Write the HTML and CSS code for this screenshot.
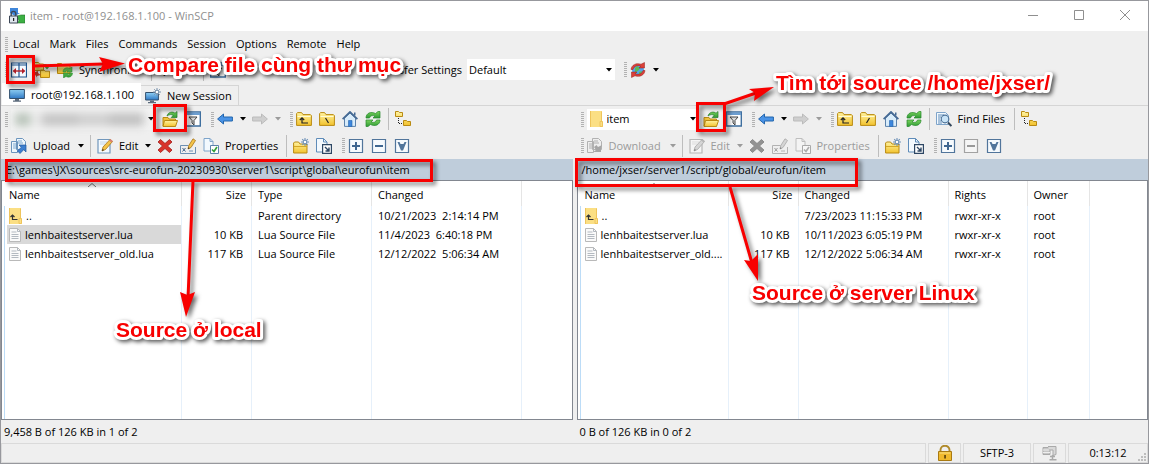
FILE: index.html
```html
<!DOCTYPE html>
<html lang="en">
<head>
<meta charset="utf-8">
<title>item - root@192.168.1.100 - WinSCP</title>
<link rel="stylesheet" href="styles.css">
</head>
<body>
<svg class="sprite" aria-hidden="true">
  <defs>
    <linearGradient id="gold" x1="0" y1="0" x2="0" y2="1"><stop offset="0" stop-color="#fff3a0"/><stop offset="1" stop-color="#f2c22e"/></linearGradient>
    <linearGradient id="blue" x1="0" y1="0" x2="0" y2="1"><stop offset="0" stop-color="#8fd0f5"/><stop offset="1" stop-color="#2f78c4"/></linearGradient>
    <linearGradient id="green" x1="0" y1="0" x2="0" y2="1"><stop offset="0" stop-color="#7bd35c"/><stop offset="1" stop-color="#2e9a35"/></linearGradient>
  </defs>
  <symbol id="i-caret" viewBox="0 0 6 4"><path d="M0 0h6L3 3.6z" fill="currentColor"/></symbol>
  <symbol id="i-app" viewBox="0 0 16 16"><path d="M1 0h8v5h2L6 8 1 5z" fill="#3f86da"/><path d="M8 8l4-1 4 0v8h-8l2-2z" fill="#3cb043" stroke="#24702a" stroke-width=".6"/><path d="M2.2 8V6a2.3 2.6 0 0 1 4.6 0v2" fill="none" stroke="#3d4757" stroke-width="1.4"/><path d="M.5 8h8v7h-8z" fill="#dfe6ee" stroke="#3d4757"/><path d="M4 10h1.2v3H4z" fill="#222"/></symbol>
  <symbol id="i-folder" viewBox="0 0 16 16"><path d="M.6 14.4V2.5L1.6 1.6h4l1.4 2h7.4l1 1v9.8z" fill="url(#gold)" stroke="#b98a12"/><path d="M1.5 5.5h13" stroke="#fffbd5"/></symbol>
  <symbol id="i-up" viewBox="0 0 16 16"><use href="#i-folder"/><path d="M6 7v5h6M3.800 9L6 6.800 8.200 9" fill="none" stroke="#222" stroke-width="1.200"/></symbol>
  <symbol id="i-root" viewBox="0 0 16 16"><use href="#i-folder"/><path d="M6.500 7l3 5" fill="none" stroke="#222" stroke-width="1.200"/></symbol>
  <symbol id="i-rroot" viewBox="0 0 16 16"><use href="#i-folder"/><path d="M9.500 7l-3 5" fill="none" stroke="#222" stroke-width="1.200"/></symbol>
  <symbol id="i-open" viewBox="0 0 16 16"><path d="M1 15V6.500h5l1 1.500h6.500v7z" fill="#efc23c" stroke="#b98a12"/><path d="M2.500 9.500h13L13.500 15.500H1z" fill="url(#gold)" stroke="#b98a12"/><path d="M5 5C6 .8 11 .2 13 2.200L15 .5v6H9.200l2-2C9.500 3 7 3.500 5 5z" fill="url(#green)" stroke="#237a2a" stroke-width=".7"/></symbol>
  <symbol id="i-filter" viewBox="0 0 16 16"><path d="M.7 1h14.600v14H.7z" fill="#fff" stroke="#3f6f9f" stroke-width="1.400"/><path d="M1 1.500h14v2.500H1z" fill="#6d9ed0"/><path d="M4 6h8L9 9.500V14L7 12V9.500z" fill="#ddd" stroke="#444"/></symbol>
  <symbol id="i-back" viewBox="0 0 16 16"><path d="M.6 8L6.500 3v3H15.400v4H6.500v3z" fill="#4a93e6" stroke="#2366ad"/></symbol>
  <symbol id="i-fwd" viewBox="0 0 16 16"><path d="M15.400 8L9.500 3v3H.6v4h8.900v3z" fill="#bbb" stroke="#999"/></symbol>
  <symbol id="i-home" viewBox="0 0 16 16"><path d="M2.500 7v8.400h11V7L8 2z" fill="#d9ecfa" stroke="#5c82ab"/><path d="M.6 8.200L8 1l7.400 7.200" fill="none" stroke="#466a94" stroke-width="1.800"/><path d="M6.500 9.500h3.500v6H6.500z" fill="#3d86dc" stroke="#2765ab" stroke-width=".6"/><path d="M12 1.500h1.500v3H12z" fill="#466a94"/></symbol>
  <symbol id="i-refresh" viewBox="0 0 16 16"><path d="M1 7C1 2 6 .2 10.500 2.500L13 .5h2v6.500H8l2-2C7 4 5 5 4.500 7z" fill="url(#green)" stroke="#26882d" stroke-width=".7"/><path d="M15 9c0 5-5 6.800-9.500 4.500L3 15.500H1V9h7l-2 2c3 1 5 0 5.500-2z" fill="url(#green)" stroke="#26882d" stroke-width=".7"/></symbol>
  <symbol id="i-tree" viewBox="0 0 16 16"><path d="M3.500 7v5.500H8" fill="none" stroke="#222" stroke-dasharray="1 1"/><path d="M.5 5.500v-5h3l1 1h3v4zM8.500 14.500v-5h3l1 1h3v4z" fill="url(#gold)" stroke="#b98a12"/></symbol>
  <symbol id="i-upload" viewBox="0 0 16 16"><path d="M.5 3.500h6v11h-6zM5.500.5h6l3 3v8h-9z" fill="#eef6fc" stroke="#6c95bd"/><path d="M2 6h3M2 8h3M2 10h3M7 3h4M7 5h5" stroke="#7fa9cf"/><path d="M8 7h7v7l-2.300-2.300L9 15.500 6.500 13l3.800-3.700z" fill="#3d7fd0" stroke="#1f579c" stroke-width=".7"/></symbol>
  <symbol id="i-download" viewBox="0 0 16 16"><path d="M.5 3.500h6v11h-6zM5.500.5h6l3 3v8h-9z" fill="#eee" stroke="#888"/><path d="M2 6h3M2 8h3M2 10h3M7 3h4M7 5h5" stroke="#888"/><path d="M15 7L11 9 9.500 7 7 9l2 3-3 2h8V9z" fill="#777"/></symbol>
  <symbol id="i-edit" viewBox="0 0 16 16"><path d="M1 1.500h12v13.500H1z" fill="#f4faff" stroke="#7197bc" stroke-width="1.200"/><path d="M3 4h7M3 6h5" stroke="#c2d5e8"/><path d="M5 13l1-4L13 1.500l2.500 2L8.500 11.500z" fill="#f4c44a" stroke="#a77316" stroke-width=".8"/><path d="M12 2.500l1.500-1.500 2.300 2L14.500 4.500z" fill="#d98070"/><path d="M5 13l.7-2 1.300 1z" fill="#222"/></symbol>
  <symbol id="i-del" viewBox="0 0 16 16"><path d="M3.500 1.500L8 5.500l4.500-4L15 4l-4.500 4 4.500 4-2.500 2.500L8 10.500l-4.500 4L1 12l4.500-4L1 4z" fill="#d9332b" stroke="#9f1c18" stroke-width=".8"/></symbol>
  <symbol id="i-rename" viewBox="0 0 16 16"><path d="M.5 7.500h8M15.500 9v6.500H.5v-8M9 13h4" fill="none" stroke="#6c8fb3"/><path d="M2.500 10l3 3.500M5.500 10l-3 3.500" stroke="#41638a"/><path d="M8 11l.8-3.500L13 .8l2.500 1.700-4.500 7z" fill="#f4c44a" stroke="#a77316" stroke-width=".8"/><path d="M8 11l.4-1.700 1.300.9z" fill="#222"/></symbol>
  <symbol id="i-props" viewBox="0 0 16 16"><path d="M1 .5h6l3 3V13H1z" fill="#f3f9fe" stroke="#7ea4ca"/><path d="M7 .5v3h3" fill="none" stroke="#7ea4ca"/><path d="M7.500 7.500h8v8h-8z" fill="#fff" stroke="#5c82ab"/><path d="M9 11.500l2 2 3-4.500" fill="none" stroke="#33a03a" stroke-width="1.700"/></symbol>
  <symbol id="i-newdir" viewBox="0 0 16 16"><path d="M.6 15V5L1.600 4h4l1.400 2h6l1 1v8z" fill="url(#gold)" stroke="#b98a12"/><path d="M1 8.500h13" stroke="#d4a726"/><path d="M12 0v8M8 4h8M9.200 1.200l5.600 5.600M14.800 1.200L9.200 6.800" stroke="#6f92b8" stroke-width="1.100"/><circle cx="12" cy="4" r="1.800" fill="#fff" stroke="#6f92b8"/></symbol>
  <symbol id="i-newfile" viewBox="0 0 16 16"><path d="M.5.5h7l3.500 3.500v10H.5z" fill="#f3f9fe" stroke="#5f8cb9"/><path d="M7.500.5v3.500H11" fill="none" stroke="#5f8cb9"/><path d="M6.600 6.600h8.800v8.800H6.600z" fill="#fff" stroke="#2e4764" stroke-width="1.200"/><path d="M9 9l4 4M13 9.500V13H9.500" fill="none" stroke="#2e4764" stroke-width="1.400"/></symbol>
  <symbol id="i-plus" viewBox="0 0 16 16"><path d="M1.500 1.500h13v13h-13z" fill="#f6fafd" stroke="#51759b" stroke-width="1.200"/><path d="M8 4v8M4 8h8" stroke="#3f6690" stroke-width="2"/></symbol>
  <symbol id="i-minus" viewBox="0 0 16 16"><path d="M1.500 1.500h13v13h-13z" fill="#f6fafd" stroke="#51759b" stroke-width="1.200"/><path d="M4 8h8" stroke="#3f6690" stroke-width="2"/></symbol>
  <symbol id="i-inv" viewBox="0 0 16 16"><path d="M1.500 1.500h13v13h-13z" fill="#f6fafd" stroke="#51759b" stroke-width="1.200"/><path d="M3.500 4h2l1 2h3l1-2h2L9 12.500H7z" fill="#51759b"/></symbol>
  <symbol id="i-find" viewBox="0 0 16 16"><path d="M.5 1.500h9l3 3v9H.5z" fill="#f3f9fe" stroke="#7ea4ca"/><path d="M2 4h6M2 6h3M2 8h2M2 10h3M2 12h4" stroke="#5f8cb9"/><path d="M12 11.500l3.400 3.500" stroke="#34475c" stroke-width="2"/><circle cx="9" cy="8" r="3.800" fill="#c9e4f7" stroke="#4d7298" stroke-width="1.200"/></symbol>
  <symbol id="i-compare" viewBox="0 0 16 16"><path d="M.5 1h15v14H.5z" fill="#f5faff" stroke="#1f5590" stroke-width="1.200"/><path d="M8 1v14M1 3h14" stroke="#1f5590" stroke-width="1.200"/><path d="M2.500 9h11" stroke="#b3202a" stroke-width="1.400"/><path d="M1.800 9L5 6v6zM14.200 9L11 6v6z" fill="#b3202a"/></symbol>
  <symbol id="i-dirsync" viewBox="0 0 16 16"><path d="M.5 8.500v-8h4l1 1.500h4v6.500zM6.500 15.500V8h3.500l1 1.200h4.500v6.300z" fill="url(#gold)" stroke="#b98a12"/><path d="M9 2.500c3-1 4.500 0 5 2h1.500L13 7.500 10.500 4.500" fill="#3ca443"/><path d="M1 10l3-1v2l3 2-4 1v1.500L.5 12z" fill="#ce3b2d"/></symbol>
  <symbol id="i-sync" viewBox="0 0 16 16"><path d="M.5 11.500v-10h4l1.500 1.500h7v8.500z" fill="url(#gold)" stroke="#b98a12"/><path d="M6 10c0-4 4-5 6.500-3.500L15 5v5h-5l1-1.500c-1-.5-2 0-2.200 1.500zM15.500 11c0 4-4 5-6.500 3.500L6.500 16v-5h5l-1 1.500c1 .5 2 0 2.200-1.500z" fill="url(#green)" stroke="#26882d" stroke-width=".5"/></symbol>
  <symbol id="i-pc" viewBox="0 0 16 16"><path d="M.6 2.500h14.800v9H.6z" fill="url(#blue)" stroke="#33506e"/><path d="M6 12h4v1.500h2v1.200H4v-1.200h2z" fill="#5c6b7c"/></symbol>
  <symbol id="i-pcnew" viewBox="0 0 16 16"><path d="M.6 4.500h12.800v7.500H.6z" fill="url(#blue)" stroke="#33506e"/><path d="M5 12.500h4V14h2v1.200H3V14h2z" fill="#5c6b7c"/><path d="M12 0v8M8 4h8M9.200 1.200l5.600 5.600M14.800 1.200L9.200 6.800" stroke="#7b93ac"/><circle cx="12" cy="4" r="1.800" fill="#fff" stroke="#7b93ac"/></symbol>
  <symbol id="i-globe" viewBox="0 0 16 16"><circle cx="8" cy="8" r="6" fill="#57a4e8"/><path d="M5 6l2-2 3 2-2 3-3 1zM9 10l3-1-1 3H9z" fill="#5cbb55"/><path d="M1 7.500C1.500 3 6 .5 11 2.200L14.500.5v5.500H9L10.800 4.200C7 2.800 4 4.200 3 7.500zM15 8.500c-.5 4.500-5 7-10 5.300L1.500 15.500V10H7L5.200 11.800c3.800 1.400 6.800 0 7.800-3.300z" fill="#db4038" stroke="#951f1c" stroke-width=".5"/></symbol>
  <symbol id="i-yfolder" viewBox="0 0 13 16"><path d="M0 0h12v10.500h1V16H0z" fill="#fbdf84"/><path d="M11.500.5v10M.5 0v16M10 15.500v-5h2.500v5z" fill="none" stroke="#eec45c"/></symbol>
  <symbol id="i-parent" viewBox="0 0 13 16"><use href="#i-yfolder"/><path d="M3.500 7.500v4H8.500M1.500 9L3.500 7l2 2" fill="none" stroke="#333" stroke-width="1.200"/></symbol>
  <symbol id="i-file" viewBox="0 0 12 14"><path d="M.5.5h8l3 3v10H.5z" fill="#fafafa" stroke="#b9b9b9"/><path d="M8.500.5v3h3M2.500 4h5M2.500 6.500h7M2.500 8.500h7M2.500 10.500h7" fill="none" stroke="#b3b9c0"/></symbol>
  <symbol id="i-lock" viewBox="0 0 16 16"><path d="M3.500 7V5a4.500 4.300 0 0 1 9 0v2" fill="none" stroke="#b08a2a" stroke-width="1.900"/><path d="M1.500 6.500h13v9h-13z" fill="#f0b92d" stroke="#a97a12"/><path d="M2.500 8h11" stroke="#fbe083"/><path d="M7.300 10h1.500v3.500H7.300z" fill="#4c3608"/></symbol>
  <symbol id="i-zip" viewBox="0 0 16 16"><path d="M1 2.500h7l-1 2h1v5H1z" fill="#c6c6c6" stroke="#a9a9a9"/><path d="M1 5h7M1 7.500h7" stroke="#eee"/><path d="M6 1.500h8v8l-3 1V5H7" fill="#d8d8d8" stroke="#a9a9a9"/><path d="M8 11.500h5M10.500 10v4M7.500 14.800h7" stroke="#a9a9a9" stroke-width="1.500"/></symbol>
</svg>

<main class="window">
  <header class="titlebar">
    <svg class="ico"><use href="#i-app"/></svg>
    <h1>item - root@192.168.1.100 - WinSCP</h1>
    <div class="winbtns">
      <button aria-label="Minimize"><svg viewBox="0 0 10 10"><path d="M0 5.500h10"/></svg></button>
      <button aria-label="Maximize"><svg viewBox="0 0 10 10"><path d="M.5.5h9v9h-9z"/></svg></button>
      <button aria-label="Close"><svg viewBox="0 0 10 10"><path d="M0 0l10 10M10 0L0 10"/></svg></button>
    </div>
  </header>

  <nav class="menu">
    <i class="grip"></i>
    <button>Local</button><button>Mark</button><button>Files</button><button>Commands</button><button>Session</button><button>Options</button><button>Remote</button><button>Help</button>
  </nav>

  <div class="bar main-bar">
    <i class="grip"></i>
    <button class="btn" aria-label="Compare"><svg class="ico"><use href="#i-compare"/></svg></button>
    <button class="btn" aria-label="Synchronize folders"><svg class="ico"><use href="#i-dirsync"/></svg></button>
    <button class="btn wide-sync"><svg class="ico"><use href="#i-sync"/></svg>Synchronize</button>
    <i class="sep"></i>
    <button class="btn queue">Queue</button>
    <i class="sep"></i>
    <button class="btn" aria-label="Queue list"><svg class="ico"><use href="#i-filter"/></svg></button>
    <label class="preset" for="preset">Transfer Settings</label>
    <span class="combo preset-combo"><select id="preset"><option>Default</option></select><svg class="caret"><use href="#i-caret"/></svg></span>
    <i class="grip"></i>
    <button class="btn" aria-label="Keep remote directory up to date"><svg class="ico"><use href="#i-globe"/></svg></button>
    <button class="drop" aria-label="More"><svg class="caret"><use href="#i-caret"/></svg></button>
  </div>

  <div class="tabs">
    <button class="tab active"><svg class="ico"><use href="#i-pc"/></svg>root@192.168.1.100</button>
    <button class="tab"><svg class="ico"><use href="#i-pcnew"/></svg>New Session</button>
  </div>

  <div class="panels">
    <section class="panel">
      <div class="bar">
        <i class="grip"></i>
        <span class="combo drive"><select aria-label="Local drive"></select><span class="smudge"></span><svg class="caret"><use href="#i-caret"/></svg></span>
        <button class="btn" aria-label="Open directory"><svg class="ico"><use href="#i-open"/></svg></button>
        <button class="btn" aria-label="Filter"><svg class="ico"><use href="#i-filter"/></svg></button>
        <i class="grip"></i>
        <button class="btn" aria-label="Back"><svg class="ico"><use href="#i-back"/></svg></button>
        <button class="drop" aria-label="Back history"><svg class="caret"><use href="#i-caret"/></svg></button>
        <button class="btn" disabled aria-label="Forward"><svg class="ico"><use href="#i-fwd"/></svg></button>
        <button class="drop" disabled aria-label="Forward history"><svg class="caret"><use href="#i-caret"/></svg></button>
        <i class="grip"></i>
        <button class="btn" aria-label="Parent directory"><svg class="ico"><use href="#i-up"/></svg></button>
        <button class="btn" aria-label="Root directory"><svg class="ico"><use href="#i-root"/></svg></button>
        <button class="btn" aria-label="Home"><svg class="ico"><use href="#i-home"/></svg></button>
        <button class="btn" aria-label="Refresh"><svg class="ico"><use href="#i-refresh"/></svg></button>
        <i class="sep"></i>
        <button class="btn" aria-label="Tree"><svg class="ico"><use href="#i-tree"/></svg></button>
      </div>
      <div class="bar">
        <i class="grip"></i>
        <button class="btn w-upload"><svg class="ico"><use href="#i-upload"/></svg>Upload</button>
        <button class="drop" aria-label="Upload options"><svg class="caret"><use href="#i-caret"/></svg></button>
        <i class="sep"></i>
        <button class="btn w-edit"><svg class="ico"><use href="#i-edit"/></svg>Edit</button>
        <button class="drop" aria-label="Edit options"><svg class="caret"><use href="#i-caret"/></svg></button>
        <button class="btn" aria-label="Delete"><svg class="ico"><use href="#i-del"/></svg></button>
        <button class="btn" aria-label="Rename"><svg class="ico"><use href="#i-rename"/></svg></button>
        <button class="btn w-props"><svg class="ico"><use href="#i-props"/></svg>Properties</button>
        <i class="sep"></i>
        <button class="btn" aria-label="New directory"><svg class="ico"><use href="#i-newdir"/></svg></button>
        <button class="btn" aria-label="New file"><svg class="ico"><use href="#i-newfile"/></svg></button>
        <i class="grip"></i>
        <button class="btn" aria-label="Select"><svg class="ico"><use href="#i-plus"/></svg></button>
        <button class="btn" aria-label="Unselect"><svg class="ico"><use href="#i-minus"/></svg></button>
        <button class="btn" aria-label="Invert selection"><svg class="ico"><use href="#i-inv"/></svg></button>
      </div>
      <div class="path">E:\games\JX\sources\src-eurofun-20230930\server1\script\global\eurofun\item</div>
      <div class="list">
        <table>
          <colgroup><col class="c-lname"><col class="c-size"><col class="c-type"><col class="c-date"><col></colgroup>
          <thead><tr><th>Name<svg class="sort" viewBox="0 0 8 4"><path d="M0 4l4-3.500L8 4"/></svg></th><th class="num">Size</th><th>Type</th><th>Changed</th><th></th></tr></thead>
          <tbody>
            <tr><td><span class="file"><svg class="f-dir"><use href="#i-parent"/></svg>..</span></td><td class="num"></td><td>Parent directory</td><td>10/21/2023  2:14:14 PM</td><td></td></tr>
            <tr><td><span class="file selected"><svg class="f-doc"><use href="#i-file"/></svg>lenhbaitestserver.lua</span></td><td class="num">10 KB</td><td>Lua Source File</td><td>11/4/2023  6:40:18 PM</td><td></td></tr>
            <tr><td><span class="file"><svg class="f-doc"><use href="#i-file"/></svg>lenhbaitestserver_old.lua</span></td><td class="num">117 KB</td><td>Lua Source File</td><td>12/12/2022  5:06:34 AM</td><td></td></tr>
            <tr class="fill"><td></td><td></td><td></td><td></td><td></td></tr>
          </tbody>
        </table>
      </div>
      <p class="summary">9,458 B of 126 KB in 1 of 2</p>
    </section>

    <section class="panel remote">
      <div class="bar">
        <i class="grip"></i>
        <span class="combo dir"><svg class="f-dir"><use href="#i-yfolder"/></svg><select aria-label="Remote directory"><option>item</option></select><svg class="caret"><use href="#i-caret"/></svg></span>
        <button class="btn" aria-label="Open directory"><svg class="ico"><use href="#i-open"/></svg></button>
        <button class="btn" aria-label="Filter"><svg class="ico"><use href="#i-filter"/></svg></button>
        <i class="grip"></i>
        <button class="btn" aria-label="Back"><svg class="ico"><use href="#i-back"/></svg></button>
        <button class="drop" aria-label="Back history"><svg class="caret"><use href="#i-caret"/></svg></button>
        <button class="btn" disabled aria-label="Forward"><svg class="ico"><use href="#i-fwd"/></svg></button>
        <button class="drop" disabled aria-label="Forward history"><svg class="caret"><use href="#i-caret"/></svg></button>
        <i class="grip"></i>
        <button class="btn" aria-label="Parent directory"><svg class="ico"><use href="#i-up"/></svg></button>
        <button class="btn" aria-label="Root directory"><svg class="ico"><use href="#i-rroot"/></svg></button>
        <button class="btn" aria-label="Home"><svg class="ico"><use href="#i-home"/></svg></button>
        <button class="btn" aria-label="Refresh"><svg class="ico"><use href="#i-refresh"/></svg></button>
        <i class="sep"></i>
        <button class="btn w-find"><svg class="ico"><use href="#i-find"/></svg>Find Files</button>
        <i class="sep"></i>
        <button class="btn" aria-label="Tree"><svg class="ico"><use href="#i-tree"/></svg></button>
      </div>
      <div class="bar">
        <i class="grip"></i>
        <button class="btn w-download" disabled><svg class="ico"><use href="#i-download"/></svg>Download</button>
        <button class="drop" disabled aria-label="Download options"><svg class="caret"><use href="#i-caret"/></svg></button>
        <i class="sep"></i>
        <button class="btn w-edit" disabled><svg class="ico"><use href="#i-edit"/></svg>Edit</button>
        <button class="drop" disabled aria-label="Edit options"><svg class="caret"><use href="#i-caret"/></svg></button>
        <button class="btn" disabled aria-label="Delete"><svg class="ico"><use href="#i-del"/></svg></button>
        <button class="btn" disabled aria-label="Rename"><svg class="ico"><use href="#i-rename"/></svg></button>
        <button class="btn w-props" disabled><svg class="ico"><use href="#i-props"/></svg>Properties</button>
        <i class="sep"></i>
        <button class="btn" aria-label="New directory"><svg class="ico"><use href="#i-newdir"/></svg></button>
        <button class="btn" aria-label="New file"><svg class="ico"><use href="#i-newfile"/></svg></button>
        <i class="grip"></i>
        <button class="btn" aria-label="Select"><svg class="ico"><use href="#i-plus"/></svg></button>
        <button class="btn" disabled aria-label="Unselect"><svg class="ico"><use href="#i-minus"/></svg></button>
        <button class="btn" aria-label="Invert selection"><svg class="ico"><use href="#i-inv"/></svg></button>
      </div>
      <div class="path">/home/jxser/server1/script/global/eurofun/item</div>
      <div class="list">
        <table>
          <colgroup><col class="c-rname"><col class="c-size"><col class="c-date"><col class="c-rights"><col class="c-owner"><col></colgroup>
          <thead><tr><th>Name<svg class="sort" viewBox="0 0 8 4"><path d="M0 4l4-3.500L8 4"/></svg></th><th class="num">Size</th><th>Changed</th><th>Rights</th><th>Owner</th><th></th></tr></thead>
          <tbody>
            <tr><td><span class="file"><svg class="f-dir"><use href="#i-parent"/></svg>..</span></td><td class="num"></td><td>7/23/2023 11:15:33 PM</td><td>rwxr-xr-x</td><td>root</td><td></td></tr>
            <tr><td><span class="file"><svg class="f-doc"><use href="#i-file"/></svg>lenhbaitestserver.lua</span></td><td class="num">10 KB</td><td>10/11/2023 6:05:19 PM</td><td>rwxr-xr-x</td><td>root</td><td></td></tr>
            <tr><td><span class="file"><svg class="f-doc"><use href="#i-file"/></svg>lenhbaitestserver_old....</span></td><td class="num">117 KB</td><td>12/12/2022 5:06:34 AM</td><td>rwxr-xr-x</td><td>root</td><td></td></tr>
            <tr class="fill"><td></td><td></td><td></td><td></td><td></td><td></td></tr>
          </tbody>
        </table>
      </div>
      <p class="summary">0 B of 126 KB in 0 of 2</p>
    </section>
  </div>

  <footer class="status">
    <span class="cell grow"></span>
    <span class="cell s-lock"><svg class="ico"><use href="#i-lock"/></svg></span>
    <span class="cell s-proto">SFTP-3</span>
    <span class="cell s-zip"><svg class="ico"><use href="#i-zip"/></svg></span>
    <span class="cell s-time">0:13:12<svg class="resize" viewBox="0 0 8 8"><path d="M6 0h2v2H6zM3 3h2v2H3zM6 3h2v2H6zM0 6h2v2H0zM3 6h2v2H3zM6 6h2v2H6z"/></svg></span>
  </footer>
</main>

<svg class="notes" width="1149" height="464" viewBox="0 0 1149 464">
  <g class="marks">
    <rect x="7.500" y="56.500" width="26" height="26"/>
    <rect x="154.500" y="105.500" width="31" height="25"/>
    <rect x="6.500" y="160.500" width="425" height="20"/>
    <rect x="697.500" y="103.500" width="27" height="27"/>
    <rect x="576.500" y="159.500" width="280" height="26"/>
    <path d="M34 66L104 64M193 181L188 298M730 187L752 263M724 104L756 93"/>
  </g>
  <g class="heads">
    <path d="M99 57L125 63.500 99 72l4-8z"/>
    <path d="M180 292l7.500 3 7.500-3-9 25z"/>
    <path d="M744 260l7 1 7-7 0 27z"/>
    <path d="M749 89l25-2-20 14 1-8z"/>
  </g>
  <g class="captions">
    <text x="128" y="72">Compare file cùng thư mục</text>
    <text x="776" y="90">Tìm tới source /home/jxser/</text>
    <text x="116" y="337">Source ở local</text>
    <text x="752" y="300">Source ở server Linux</text>
  </g>
</svg>
</body>
</html>
```

FILE: styles.css
```css
* { box-sizing: border-box; }

body {
  margin: 0;
  background: #a0a0a6;
  color: #000;
  font: 11px/16px "Open Sans", "Noto Sans", sans-serif;
}

button, select {
  margin: 0;
  padding: 0;
  border: 0;
  background: none;
  color: inherit;
  font: inherit;
}

.sprite { position: absolute; width: 0; height: 0; }

.window {
  display: flex;
  flex-direction: column;
  min-height: 100vh;
  border: 1px solid #97989d;
  background: #efefef;
}

.ico { flex: none; width: 16px; height: 16px; }
.caret { flex: none; width: 6px; height: 4px; }

.titlebar {
  display: flex;
  align-items: center;
  height: 30px;
  padding-left: 8px;
  gap: 5px;
  background: #fff;
  color: #8f8f8f;
}
.titlebar h1 { flex: 1; margin: 0; font-size: 11px; font-weight: 400; }
.winbtns { display: flex; }
.winbtns button { width: 46px; height: 28px; }
.winbtns svg { width: 10px; height: 10px; fill: none; stroke: #8f8f8f; }

.grip {
  flex: none;
  width: 3px;
  height: 15px;
  margin-left: 6px;
  background: repeating-linear-gradient(#b2b2b2 0 1px, #efefef 1px 2px);
}
.grip:first-child { margin-left: 4px; }

.menu { display: flex; align-items: center; height: 26px; gap: 10px; }
.menu .grip { margin-right: -5px; }

.bar { display: flex; align-items: center; height: 26px; }
.bar + .bar { height: 27px; }
.main-bar { height: 25px; }

.btn {
  display: flex;
  flex: none;
  align-items: center;
  width: 23px;
  height: 23px;
  padding-left: 3px;
  gap: 6px;
  white-space: nowrap;
}
.btn:disabled, .drop:disabled { color: #9b9b9b; }
.btn:disabled .ico { filter: grayscale(1); opacity: 0.6; }
.drop { display: flex; flex: none; align-items: center; justify-content: center; width: 12px; height: 23px; }
.sep { flex: none; width: 1px; height: 22px; margin: 0 3px; background: #bdbdbd; }

.w-upload { width: 67px; }
.w-download { width: 83px; }
.w-edit { width: 48px; }
.w-props { width: 83px; }
.w-find { width: 78px; }
.wide-sync { width: 94px; }
.queue { width: 45px; }

.combo { display: flex; flex: none; align-items: center; height: 21px; background: #fff; }
.combo select { flex: 1; min-width: 0; height: 21px; appearance: none; outline: 0; }
.combo .caret { margin: 0 3px; }
.drive { position: relative; width: 146px; margin: 0 2px 0 3px; background: #f3f3f3; }
.dir { width: 111px; margin: 0 2px 0 3px; padding-left: 3px; gap: 4px; }
.dir .caret { margin-right: 2px; }
.smudge {
  position: absolute;
  left: 4px;
  top: 4px;
  width: 130px;
  height: 13px;
  background: linear-gradient(90deg, #b9c4ba 0 14px, #eee 18px 22px, #c4c4c4 30px 60px, #cfcfcf 66px 90px, #c0c0c0 98px 126px, #ddd 130px);
  filter: blur(4px);
}
.preset { width: 237px; padding-right: 5px; text-align: right; }
.preset-combo { width: 148px; margin-right: 3px; padding-left: 2px; }

.tabs { display: flex; align-items: flex-end; height: 24px; padding-left: 1px; border-bottom: 1px solid #d5d5d5; }
.tab {
  display: flex;
  align-items: center;
  gap: 6px;
  height: 20px;
  width: 98px;
  padding-left: 4px;
  border: 1px solid #d5d5d5;
  border-bottom: 0;
  border-left: 0;
  white-space: nowrap;
}
.tab.active { width: 139px; height: 22px; padding-left: 7px; border-color: #fff; background: #fff; }

.panels { display: flex; flex: 1; gap: 4px; }
.panel { display: flex; flex: 1; flex-direction: column; min-width: 0; }
.path { height: 21px; padding: 3px 5px; background: #bfcddb; white-space: nowrap; }
.list { display: flex; flex: 1; padding-left: 2px; border: 1px solid #828790; background: #fff; }
.summary { margin: 0; padding: 4px 3px 3px; }

table { width: 100%; table-layout: fixed; border-collapse: separate; border-spacing: 0; }
.c-lname { width: 178px; }
.c-rname { width: 149px; }
.c-size { width: 70px; }
.c-type { width: 120px; }
.c-date { width: 150px; }
.c-rights { width: 79px; }
.c-owner { width: 62px; }

th {
  position: relative;
  height: 25px;
  padding: 2px 5px 0 6px;
  border-right: 1px solid #e5e5e5;
  font-weight: 400;
  text-align: left;
}
th:first-child { padding-left: 5px; }
td {
  height: 19px;
  padding: 0 0 0 6px;
  border-right: 1px solid #e6f0fa;
  white-space: pre;
  overflow: hidden;
}
td:first-child { padding: 0 0 0 2px; border-left: 1px solid #bcdcf7; }
th:last-child, td:last-child { border-right: 0; }
th.num { text-align: right; }
td.num { padding-right: 8px; text-align: right; }
.fill td { height: auto; }
.sort { position: absolute; left: 84px; top: 2px; width: 8px; height: 4px; fill: none; stroke: #777; }
.remote .sort { left: 70px; }

.file { display: flex; align-items: center; height: 19px; padding-left: 2px; gap: 4px; }
.file.selected { background: #d9d9d9; }
.f-dir { flex: none; width: 13px; height: 16px; }
.f-doc { flex: none; width: 12px; height: 14px; }

.status { display: flex; height: 20px; gap: 2px; }
.cell {
  position: relative;
  display: flex;
  flex: none;
  align-items: center;
  justify-content: center;
  border: 1px solid #dadada;
}
.cell.grow { flex: 1; }
.s-lock { width: 33px; }
.s-proto { width: 68px; }
.s-zip { width: 33px; }
.s-time { width: 80px; }
.resize { position: absolute; right: 1px; bottom: 1px; width: 8px; height: 8px; fill: #bdbdbd; }

/* Callouts drawn over the window */
.notes { position: absolute; left: 0; top: 0; overflow: hidden; pointer-events: none; }
.marks { fill: none; stroke: #f80000; stroke-width: 3; filter: drop-shadow(3px 3px 2px #0008); }
.heads { fill: #f80000; filter: drop-shadow(3px 3px 2px #0008); }
.captions {
  fill: #f80000;
  stroke: #fff;
  stroke-width: 6;
  stroke-linejoin: round;
  paint-order: stroke;
  font: bold 21px "Liberation Sans", sans-serif;
  filter: drop-shadow(2px 2px 2px #000a);
}
```
